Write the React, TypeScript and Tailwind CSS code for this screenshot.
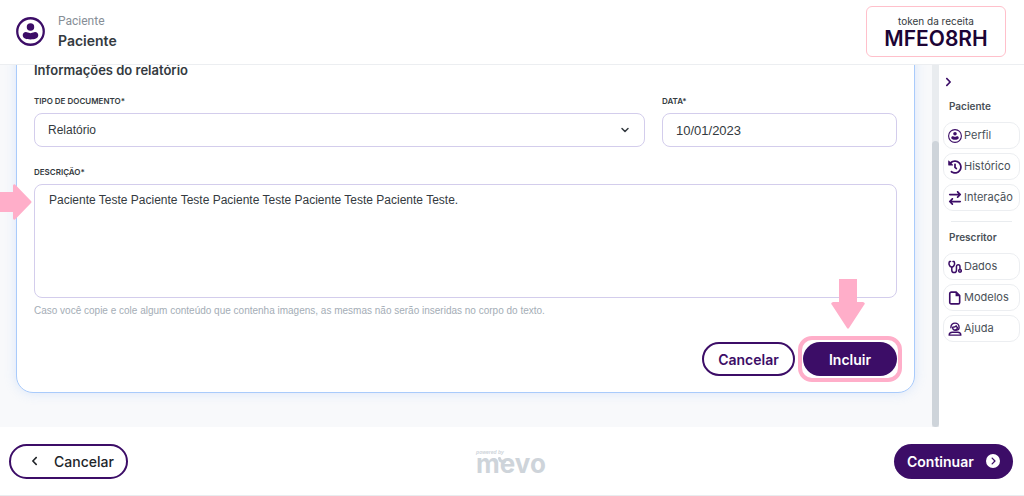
import React, { useState } from 'react';
import { FaChevronLeft, FaChevronRight, FaHistory } from 'react-icons/fa';
import { FaArrowRightArrowLeft, FaCircleChevronRight } from 'react-icons/fa6';
import { ChevronDown } from 'lucide-react';

function UserIcon({ className }: { className?: string }) {
  return (
    <svg viewBox="0 0 28 28" className={className} aria-hidden="true">
      <circle cx="14" cy="14" r="12.8" fill="none" stroke="currentColor" strokeWidth="2.2" />
      <circle cx="14" cy="9.6" r="3.6" fill="currentColor" />
      <path
        d="M9.6 14.6c1.3 0 2 1 4.400 1s3.100-1 4.400-1c1.900 0 3.100 1.300 3.100 3.100 0 3-3.400 4-7.500 4s-7.500-1-7.500-4c0-1.800 1.200-3.100 3.100-3.100z"
        fill="currentColor"
      />
    </svg>
  );
}

function StethoscopeIcon({ className }: { className?: string }) {
  return (
    <svg viewBox="0 0 24 24" fill="none" stroke="currentColor" strokeWidth="2.6" strokeLinecap="round" strokeLinejoin="round" className={className} aria-hidden="true">
      <path d="M4.500 2.500H2.500C1 6 1.500 11 6.500 12.500 11.500 11 12 6 10.500 2.500H8.500" />
      <path d="M6.500 13v4.500a4 4 0 0 0 8 0V11a3 3 0 0 1 6 0v5" />
      <circle cx="20.500" cy="18.500" r="2.300" />
    </svg>
  );
}

function FileIcon({ className }: { className?: string }) {
  return (
    <svg viewBox="0 0 24 24" className={className} aria-hidden="true">
      <path d="M5.500 2H14l6 6v11.500a2.500 2.500 0 0 1-2.500 2.500h-12A2.500 2.500 0 0 1 3 19.500v-15A2.500 2.500 0 0 1 5.500 2z" fill="none" stroke="currentColor" strokeWidth="2.800" strokeLinejoin="round" />
      <path d="M13 1.500V9h7.500z" fill="currentColor" />
    </svg>
  );
}

function SupportIcon({ className }: { className?: string }) {
  return (
    <svg viewBox="0 0 24 24" fill="none" stroke="currentColor" strokeWidth="2.4" strokeLinecap="round" strokeLinejoin="round" className={className} aria-hidden="true">
      <path d="M5 10V9a7 7 0 0 1 14 0v1c0 2.500-1.500 4-4 4h-3" />
      <path d="M8 9c3 0 5-1 6-2.500 0 1.500 1 2.500 2 2.500v1a4 4 0 0 1-8 0z" />
      <path d="M2 22.500c0-3 2-5 5.500-5h9c3.500 0 5.500 2 5.500 5z" />
    </svg>
  );
}

const MENU = [
  {
    title: 'Paciente',
    items: [
      { label: 'Perfil', icon: UserIcon },
      { label: 'Histórico', icon: FaHistory },
      { label: 'Interação', icon: FaArrowRightArrowLeft },
    ],
  },
  {
    title: 'Prescritor',
    items: [
      { label: 'Dados', icon: StethoscopeIcon },
      { label: 'Modelos', icon: FileIcon },
      { label: 'Ajuda', icon: SupportIcon },
    ],
  },
];

const LABEL = 'block text-[8px] font-semibold leading-[14px] text-[#343a40]';

function Header() {
  return (
    <header className="flex h-[65px] shrink-0 items-center justify-between border-b border-[#eceef1] bg-white pb-[2px] pl-4 pr-[18px]">
      <div className="flex items-center gap-[13px]">
        <UserIcon className="h-[29px] w-[29px] text-[#3c0d67]" />
        <div>
          <p className="font-[Roboto,sans-serif] text-[12px] leading-5 text-[#868e96]">Paciente</p>
          <p className="text-[14px] font-semibold leading-5 text-[#343a40]">Paciente</p>
        </div>
      </div>
      <div className="flex h-[51px] w-[140px] flex-col items-center justify-center rounded-md border border-[#ffc0cb] pt-[2px]">
        <span className="text-[10px] leading-[14px] text-[#343a40]">token da receita</span>
        <strong className="text-[21px] font-semibold leading-[22px] text-[#1c0435]">MFEO8RH</strong>
      </div>
    </header>
  );
}

function ReportForm() {
  const [description, setDescription] = useState(
    'Paciente Teste Paciente Teste Paciente Teste Paciente Teste Paciente Teste.'
  );

  return (
    <form className="-mt-5 ml-4 mr-[17px] rounded-[17px] border border-[#a9cbfb] bg-white px-[17px] pb-4 pt-[14px] shadow-[0_0_12px_rgba(150,190,250,0.3)]">
      <h2 className="text-[13px] font-semibold leading-5 text-[#343a40]">Informações do relatório</h2>

      <div className="mt-[14px] flex gap-[17px]">
        <div className="min-w-0 flex-1">
          <label htmlFor="tipo" className={LABEL}>TIPO DE DOCUMENTO*</label>
          <div className="relative mt-[5px]">
            <select id="tipo" className="h-[34px] w-full appearance-none rounded-lg border border-[#d3cdec] bg-white px-[13px] font-['Liberation_Sans',sans-serif] text-[12px] text-[#343a40]">
              <option>Relatório</option>
            </select>
            <ChevronDown className="pointer-events-none absolute right-[14px] top-[11px] h-3 w-3 text-[#343a40]" strokeWidth={3} />
          </div>
        </div>
        <div className="w-[235px]">
          <label htmlFor="data" className={LABEL}>DATA*</label>
          <input id="data" defaultValue="10/01/2023" className="mt-[5px] block h-[34px] w-full rounded-lg border border-[#d3cdec] px-[13px] font-['Liberation_Sans',sans-serif] text-[13px] text-[#343a40]" />
        </div>
      </div>

      <div className="mt-[18px]">
        <label htmlFor="descricao" className={LABEL}>DESCRIÇÃO*</label>
        <div className="relative mt-[5px]">
          <textarea
            id="descricao"
            value={description}
            onChange={e => setDescription(e.target.value)}
            className="block h-[114px] w-full resize-none rounded-lg border border-[#d3cdec] px-[14px] py-[6px] font-['Liberation_Sans',sans-serif] text-[12px] leading-[18px] text-[#343a40]"
          />
          <svg viewBox="0 0 32 36" className="absolute -left-[34px] top-0 h-9 w-8 text-[#ffaec9]" aria-hidden="true">
            <path d="M0 8H13V1.500Q14-1 16 1.500L31 17Q32 18 31 19L16 34.500Q14 37 13 34.500V28H0z" fill="currentColor" />
          </svg>
        </div>
        <p className="mt-1 font-['Liberation_Sans',sans-serif] text-[10px] leading-[18px] text-[#a4adb6]">
          Caso você copie e cole algum conteúdo que contenha imagens, as mesmas não serão inseridas no corpo do texto.
        </p>
      </div>

      <div className="mt-[22px] flex justify-end gap-2">
        <button type="button" className="h-[34px] w-[93px] rounded-full border-2 border-[#3c0d67] text-[14px] font-semibold text-[#3c0d67]">
          Cancelar
        </button>
        <div className="relative">
          <button type="submit" className="block h-[34px] w-[94px] rounded-full bg-[#3c0d67] text-[14px] font-semibold text-white">
            Incluir
          </button>
          {/* Highlight around the submit button */}
          <div className="pointer-events-none absolute -inset-x-[5px] -inset-y-[6px] rounded-[14px] border-4 border-[#ffaec9]" />
          <svg viewBox="0 0 34 50" className="absolute bottom-[47px] left-7 h-[50px] w-[34px] text-[#ffaec9]" aria-hidden="true">
            <path d="M8 0H26V23H32Q35 24 33 26L18 49Q17 50.500 16 49L1 26Q-1 24 2 23H8z" fill="currentColor" />
          </svg>
        </div>
      </div>
    </form>
  );
}

function Sidebar() {
  return (
    <aside className="w-[85px] shrink-0 bg-white px-1 pt-[11px]">
      <button aria-label="Recolher menu" className="block h-3 px-[2px] text-[#3c0d67]">
        <FaChevronRight className="h-[10px] w-[7px]" />
      </button>
      {MENU.map((group, i) => (
        <section key={group.title}>
          {i > 0 && <hr className="mx-2 mt-[10px] border-[#e9ecef]" />}
          <h3 className={i > 0 ? 'mb-2 mt-[7px] pl-[6px] text-[10px] font-semibold leading-4 text-[#495057]' : 'mb-2 mt-[10px] pl-[6px] text-[10px] font-semibold leading-4 text-[#495057]'}>
            {group.title}
          </h3>
          <div className="flex flex-col gap-1">
            {group.items.map(({ label, icon: Icon }) => (
              <button key={label} className="flex h-[27px] w-full items-center gap-[2px] rounded-[10px] border border-[#eceef1] pl-1 text-[11px] text-[#495057]">
                <Icon className="h-[14px] w-[14px] shrink-0 text-[#3c0d67]" />
                {label}
              </button>
            ))}
          </div>
        </section>
      ))}
    </aside>
  );
}

function Footer() {
  return (
    <footer className="flex h-[69px] shrink-0 items-center justify-between border-b border-[#e9ecef] bg-white pl-[9px] pr-[11px]">
      <button className="flex h-[35px] w-[119px] items-center gap-4 rounded-full border-2 border-[#3c0d67] pl-5 text-[14px] font-medium text-[#212529]">
        <FaChevronLeft className="h-[10px] w-[7px]" />
        Cancelar
      </button>
      <div className="relative flex flex-col text-[#ced4da]">
        <span className="font-['Liberation_Sans',sans-serif] text-[5px] font-bold italic leading-[5px]">powered by</span>
        <span className="text-[26px] font-bold leading-[18px]">mevo</span>
        {/* Curl that ties the m to the e */}
        <svg viewBox="0 0 8 8" className="absolute left-[22px] top-[7px] h-2 w-2" fill="none" stroke="currentColor" strokeWidth="3" strokeLinecap="round" aria-hidden="true">
          <path d="M1.500 1.500C2 4 3.500 5 6.500 4.500" />
        </svg>
      </div>
      <button className="flex h-[35px] w-[119px] items-center justify-between rounded-full bg-[#3c0d67] px-[13px] text-[14px] font-semibold text-white">
        Continuar
        <FaCircleChevronRight className="h-[14px] w-[14px]" />
      </button>
    </footer>
  );
}

export default function App() {
  return (
    <div className="flex h-screen flex-col bg-white font-[Inter,sans-serif]">
      <Header />
      <div className="flex min-h-0 flex-1">
        <main className="min-w-0 flex-1 overflow-hidden bg-[#f8f9fb]">
          <ReportForm />
        </main>
        {/* Scroll track */}
        <div className="flex w-[7px] shrink-0 flex-col justify-end bg-[#e9ecef]">
          <div className="h-[79%] rounded-full bg-[#ced4da]" />
        </div>
        <Sidebar />
      </div>
      <Footer />
    </div>
  );
}
